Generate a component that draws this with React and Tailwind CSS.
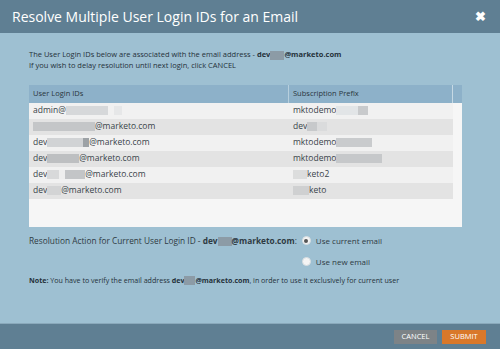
import React, { useState } from 'react';

const Blur = ({ w, tone = 'bg-[#c9cdd0]', className = '' }) => (
  <span className={`inline-block h-[9px] align-middle ${tone} ${className}`} style={{ width: w }} />
);

const rows = [
  {
    id: (
      <>admin@<Blur w={42} tone="bg-[#d6d8da]" /><Blur w={8} tone="bg-[#e6e7e8]" className="ml-[6px]" /></>
    ),
    prefix: (<>mktodemo<Blur w={22} tone="bg-[#e2e5e7]" /><Blur w={10} tone="bg-[#c8cacc]" /></>),
  },
  {
    id: (<><Blur w={62} tone="bg-[#c4c6c8]" />@marketo.com</>),
    prefix: (<>dev<Blur w={10} tone="bg-[#c7c9cb]" /><Blur w={10} tone="bg-[#dadbdc]" /></>),
  },
  {
    id: (<>dev<Blur w={36} tone="bg-[#d1d3d5]" /><Blur w={6} tone="bg-[#9da2a6]" />@marketo.com</>),
    prefix: (<>mktodemo<Blur w={36} tone="bg-[#c9cbcd]" /></>),
  },
  {
    id: (<>dev<Blur w={32} tone="bg-[#bdbfc1]" />@marketo.com</>),
    prefix: (<>mktodemo<Blur w={46} tone="bg-[#c6c8ca]" /></>),
  },
  {
    id: (<>dev<Blur w={12} tone="bg-[#d8d9da]" /><Blur w={6} tone="bg-[#eeeeee]" /><Blur w={20} tone="bg-[#c3c5c7]" />@marketo.com</>),
    prefix: (<><Blur w={14} tone="bg-[#dcdddd]" />keto2</>),
  },
  {
    id: (<>dev<Blur w={14} tone="bg-[#d3d4d5]" />@marketo.com</>),
    prefix: (<><Blur w={16} tone="bg-[#cfd0d1]" />keto</>),
  },
];

const Radio = ({ checked, label, onClick }) => (
  <button type="button" onClick={onClick} className="flex items-center gap-[5px] text-[8px] text-[#2e3a42] whitespace-nowrap">
    <span className="w-[9px] h-[9px] rounded-full bg-[#f4f4f4] border border-[#d8dde0] flex items-center justify-center">
      {checked && <span className="w-[4px] h-[4px] rounded-full bg-[#555]" />}
    </span>
    {label}
  </button>
);

export default function App() {
  const [mode, setMode] = useState('current');

  return (
    <div className="w-[500px] h-[349px] flex flex-col bg-[#9ec0d2] overflow-hidden" style={{ fontFamily: '"Open Sans", "Liberation Sans", sans-serif' }}>
      {/* Header */}
      <div className="h-[33px] shrink-0 bg-[#5f7f93] flex items-center justify-between pl-[12px] pr-[14px]">
        <h1 className="text-[14px] text-white leading-none">Resolve Multiple User Login IDs for an Email</h1>
        <span className="text-white text-[13px] font-bold leading-none">✖</span>
      </div>

      {/* Body */}
      <div className="flex-1 pl-[29px] pr-[38px] pt-[16px]">
        <p className="text-[7.5px] leading-[10px] text-[#25313a] whitespace-nowrap">
          The User Login IDs below are associated with the email address - <b>dev</b>
          <Blur w={14} tone="bg-[#8c9ba6]" className="h-[8px]" />
          <b>@marketo.com</b>
          <br />
          If you wish to delay resolution until next login, click CANCEL
        </p>

        {/* Table */}
        <div className="mt-[15px] h-[142px] bg-[#f6f6f6] flex flex-col">
          <div className="h-[18px] shrink-0 bg-[#8db1c9] flex text-[7.5px] text-[#2a3640]">
            <div className="w-[260px] pl-[4px] flex items-center border-r border-[#b7cfdd]">User Login IDs</div>
            <div className="w-[164px] pl-[4px] flex items-center border-r border-[#c6d9e4]">Subscription Prefix</div>
          </div>
          <div className="w-[424px]">
            {rows.map((r, i) => (
              <div key={i} className={`h-[16px] flex items-center text-[8.5px] text-[#39434a] ${i % 2 ? 'bg-[#e3e3e3]' : 'bg-[#f1f1f1]'}`}>
                <div className="w-[260px] pl-[4px] flex items-center">{r.id}</div>
                <div className="w-[164px] pl-[4px] flex items-center">{r.prefix}</div>
              </div>
            ))}
          </div>
        </div>

        {/* Resolution */}
        <div className="mt-[7px] flex items-start gap-[5px]">
          <div className="text-[8.3px] text-[#2e3a42] pt-[1px] whitespace-nowrap">
            Resolution Action for Current User Login ID - <b>dev</b>
            <Blur w={14} tone="bg-[#8c9ba6]" />
            <b>@marketo.com</b>:
          </div>
          <div className="flex flex-col gap-[9px] pt-[1px]">
            <Radio checked={mode === 'current'} label="Use current email" onClick={() => setMode('current')} />
            <Radio checked={mode === 'new'} label="Use new email" onClick={() => setMode('new')} />
          </div>
        </div>

        <p className="mt-[7px] text-[7.1px] text-[#25313a] whitespace-nowrap">
          <b>Note:</b> You have to verify the email address <b>dev</b>
          <Blur w={11} tone="bg-[#8c9ba6]" className="h-[7px]" />
          <b>@marketo.com</b>, in order to use it exclusively for current user
        </p>
      </div>

      {/* Footer */}
      <div className="h-[26px] shrink-0 bg-[#5f7f93] border-t border-[#8aa9bb] flex items-center justify-end gap-[5px] pr-[14px]">
        <button type="button" className="h-[14px] w-[43px] bg-[#7d8387] text-white text-[7.5px] leading-none">CANCEL</button>
        <button type="button" className="h-[14px] w-[44px] bg-[#d9782a] text-white text-[7.5px] leading-none">SUBMIT</button>
      </div>
    </div>
  );
}
